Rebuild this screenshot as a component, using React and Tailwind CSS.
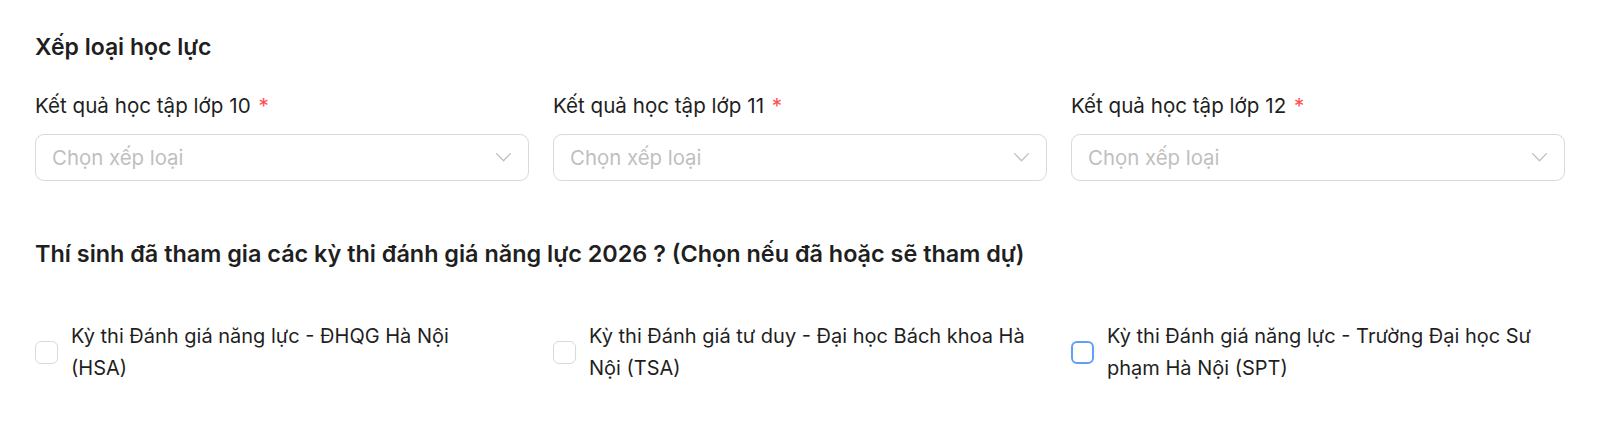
const grades = ['Kết quả học tập lớp 10', 'Kết quả học tập lớp 11', 'Kết quả học tập lớp 12'];

const exams = [
  { lines: ['Kỳ thi Đánh giá năng lực - ĐHQG Hà Nội', '(HSA)'], focused: false },
  { lines: ['Kỳ thi Đánh giá tư duy - Đại học Bách khoa Hà', 'Nội (TSA)'], focused: false },
  { lines: ['Kỳ thi Đánh giá năng lực - Trường Đại học Sư', 'phạm Hà Nội (SPT)'], focused: true },
];

function Chevron() {
  return (
    <svg width="15" height="9" viewBox="0 0 15 9" fill="none">
      <path d="M0.6 0.6 L7.5 7.8 L14.4 0.6" stroke="#bfbfbf" strokeWidth="1.3" strokeLinecap="round" strokeLinejoin="round" />
    </svg>
  );
}

function App() {
  return (
    <div className="min-h-screen bg-white px-[35px] pt-[31px] text-[#1f1f1f] font-['Inter',sans-serif]">
      {/* Xếp loại học lực */}
      <h2 className="text-[23px] leading-8 font-semibold">Xếp loại học lực</h2>

      <div className="grid grid-cols-3 gap-6 mt-[27px]">
        {grades.map((g) => (
          <div key={g} className="flex flex-col gap-[13px]">
            <label className="text-[20.6px] leading-[31.4px]">
              {g} <span className="ml-0.5 text-[#ff4d4f]">*</span>
            </label>
            <div className="flex items-center justify-between h-[47px] pl-4 pr-[17px] border border-[#d9d9d9] rounded-[9px] bg-white">
              <span className="text-[20.4px] text-[#bfbfbf]">Chọn xếp loại</span>
              <Chevron />
            </div>
          </div>
        ))}
      </div>

      {/* Kỳ thi đánh giá */}
      <h2 className="mt-[57px] text-[23.4px] leading-8 font-semibold">
        Thí sinh đã tham gia các kỳ thi đánh giá năng lực 2026 ? (Chọn nếu đã hoặc sẽ tham dự)
      </h2>

      <div className="grid grid-cols-3 gap-6 mt-[51px]">
        {exams.map((e) => (
          <label key={e.lines[0]} className="flex items-center gap-[13px]">
            <span
              className={
                e.focused
                  ? 'w-[23px] h-[23px] shrink-0 rounded-[6px] border-2 border-[#5f9ff7] bg-white'
                  : 'w-[23px] h-[23px] shrink-0 rounded-[6px] border border-[#d9d9d9] bg-white'
              }
            />
            <span className="text-[20px] leading-[31.4px]">
              {e.lines[0]}
              <br />
              {e.lines[1]}
            </span>
          </label>
        ))}
      </div>
    </div>
  );
}

export default App;
